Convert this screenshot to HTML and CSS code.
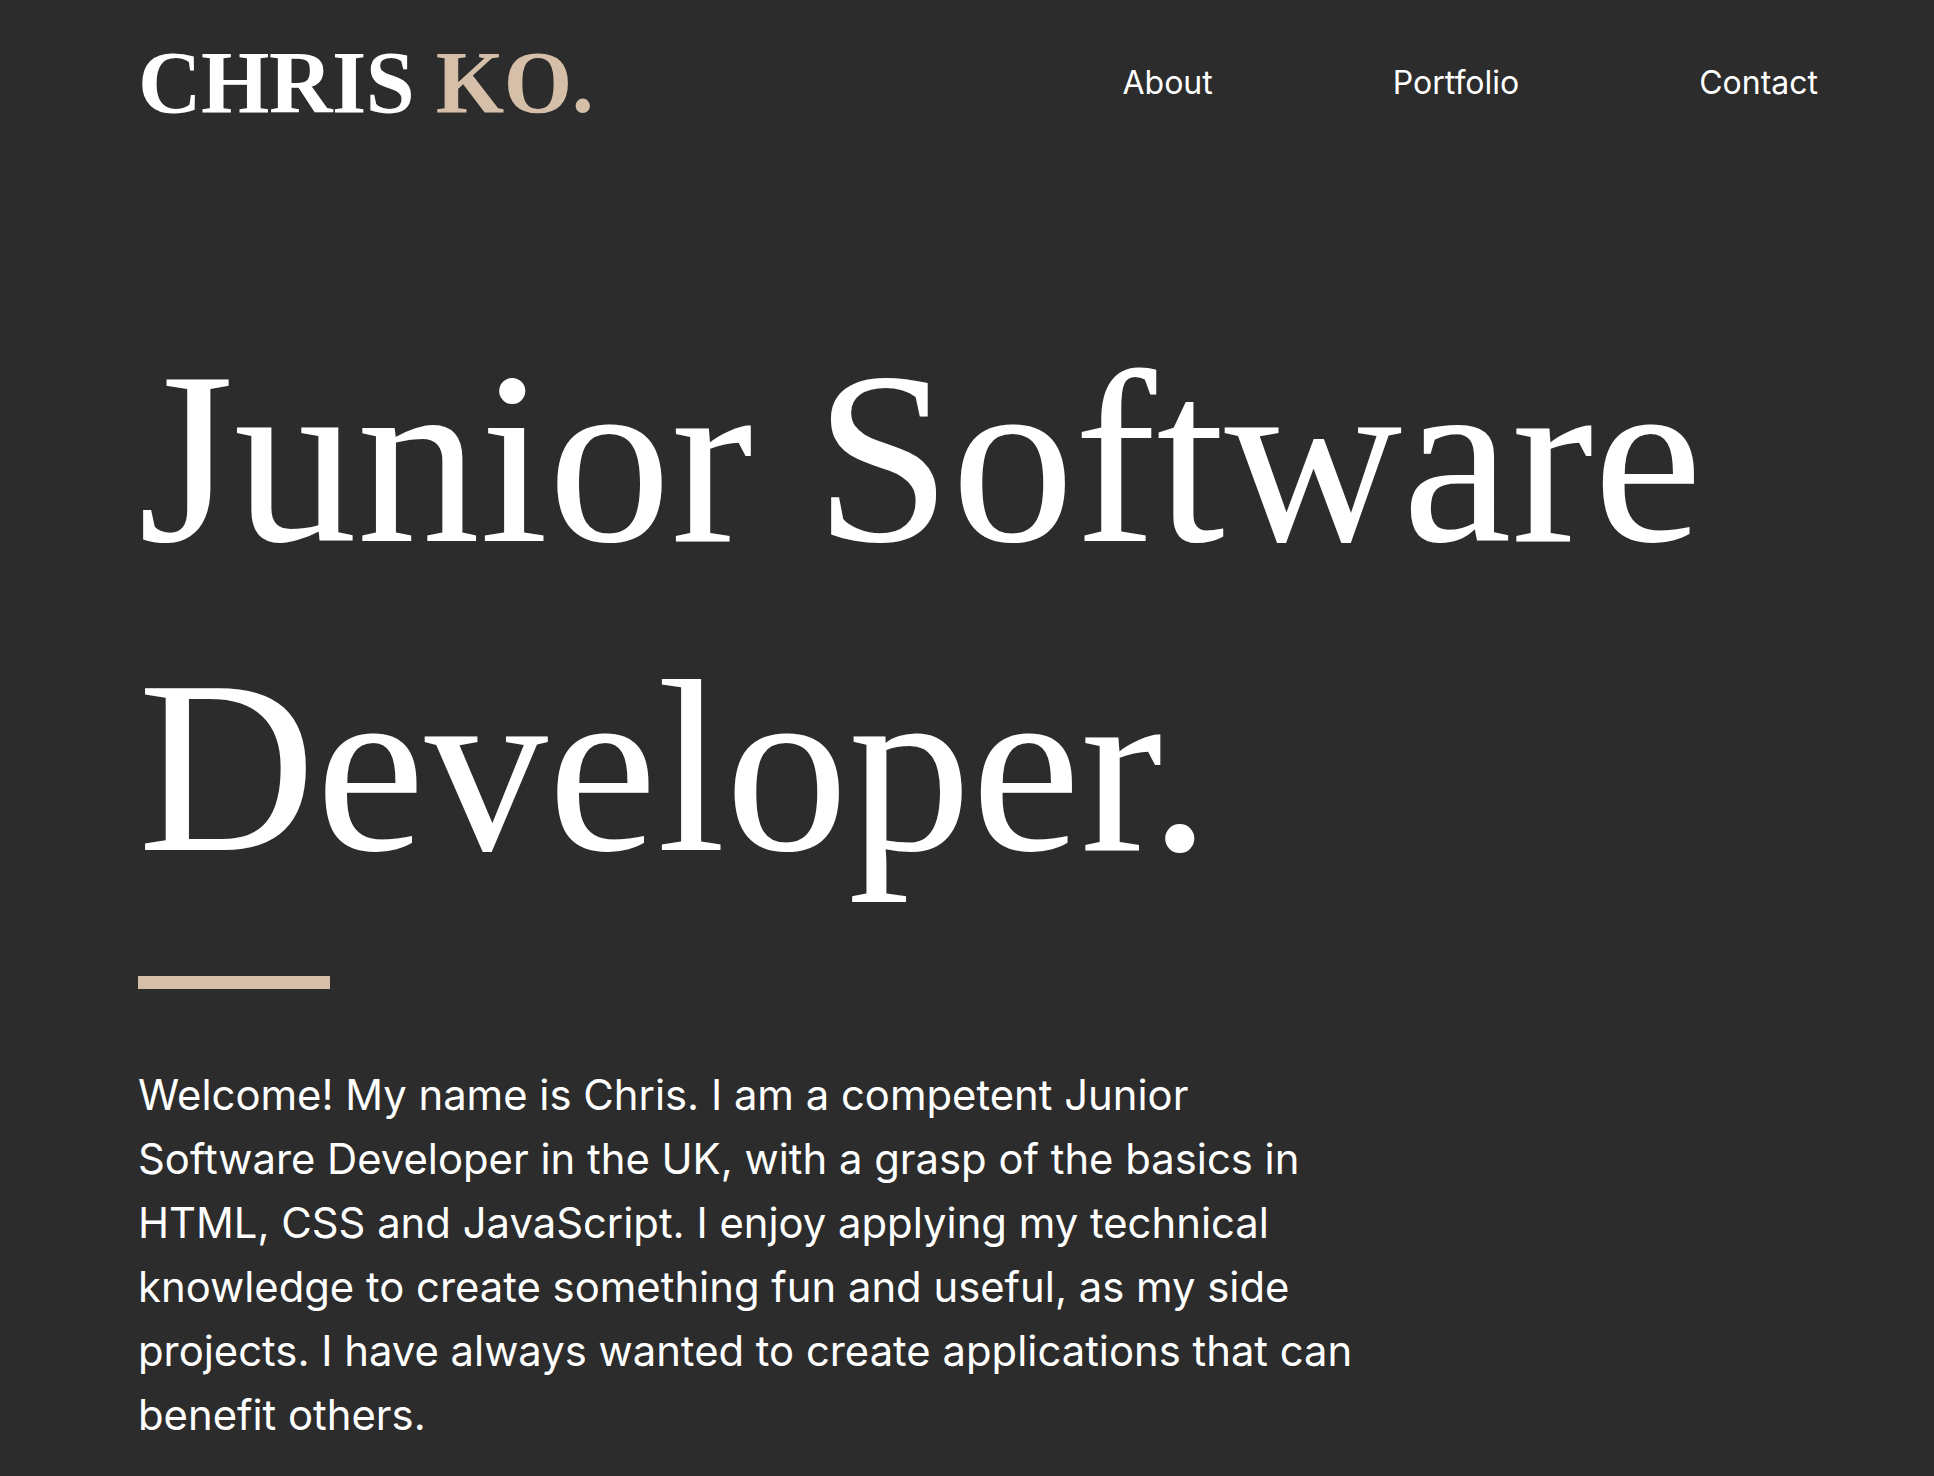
FILE: index.html
```html
<!DOCTYPE html>
<html lang="en">
<head>
<meta charset="utf-8">
<title>Chris Ko</title>
<link rel="stylesheet" href="styles.css">
</head>
<body>
<header class="site-header">
  <a class="logo" href="#">CHRIS <span class="logo-accent">KO.</span></a>
  <nav class="nav">
    <a class="nav-link" href="#about">About</a>
    <a class="nav-link" href="#portfolio">Portfolio</a>
    <a class="nav-link" href="#contact">Contact</a>
  </nav>
</header>
<main class="hero">
  <h1 class="hero-title">Junior Software Developer.</h1>
  <div class="hero-rule"></div>
  <p class="hero-text">Welcome! My name is Chris. I am a competent Junior<br>Software Developer in the UK, with a grasp of the basics in<br>HTML, CSS and JavaScript. I enjoy applying my technical<br>knowledge to create something fun and useful, as my side<br>projects. I have always wanted to create applications that can<br>benefit others.</p>
</main>
</body>
</html>
```
FILE: styles.css
```css
* {
  box-sizing: border-box;
}

html, body {
  margin: 0;
  padding: 0;
}

body {
  background: #2c2c2c;
  color: #ffffff;
  font-family: Inter, "Noto Sans", sans-serif;
  min-height: 100vh;
}

.site-header {
  display: flex;
  align-items: center;
  justify-content: space-between;
  padding: 39px 116px 0 138px;
}

.logo {
  font-family: "Liberation Serif", "Times New Roman", serif;
  font-weight: 700;
  font-size: 88px;
  line-height: 1;
  letter-spacing: -0.5px;
  color: #ffffff;
  text-decoration: none;
}

.logo-accent {
  color: #d6bfa9;
}

.nav {
  display: flex;
  gap: 180px;
}

.nav-link {
  font-size: 32px;
  line-height: 1;
  color: #ffffff;
  text-decoration: none;
}

.hero {
  padding: 0 116px 0 138px;
}

.hero-title {
  margin: 177px 0 0;
  font-family: "Liberation Serif", "Times New Roman", serif;
  font-weight: 400;
  font-size: 246px;
  line-height: 309px;
}

.hero-rule {
  width: 192px;
  height: 13px;
  margin-top: 54px;
  background: #d6bfa9;
}

.hero-text {
  margin: 74px 0 0;
  max-width: 1300px;
  font-size: 41.8px;
  line-height: 64px;
}
```
